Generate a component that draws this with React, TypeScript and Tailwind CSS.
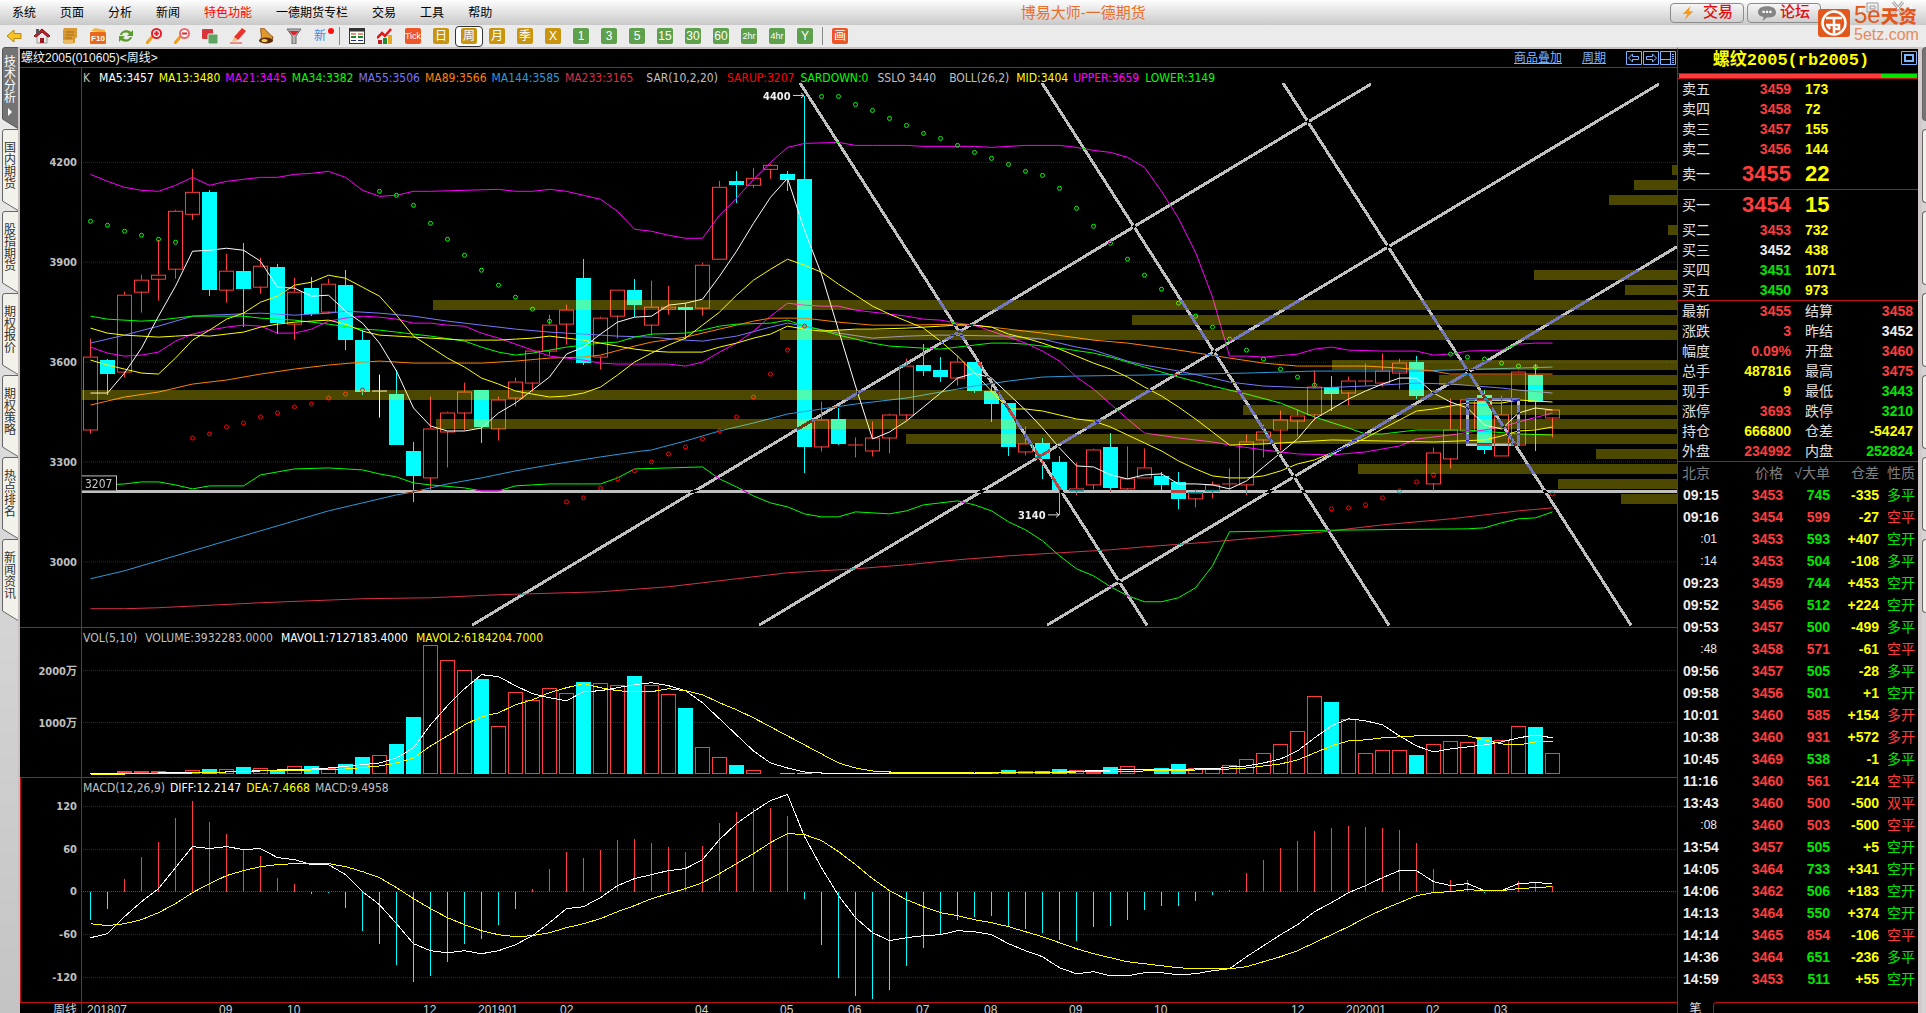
import type { ReactNode } from 'react'
import clsx from 'clsx'

const FIRST_X = 90
const STEP = 17

// "4:12 15 9" reads as bar 4 = 12, bar 5 = 15, bar 6 = 9
function series(src: string): [number, number][] {
  let i = -1
  return src.split(' ').map((token) => {
    const [a, b] = token.split(':')
    i = b === undefined ? i + 1 : Number(a)
    return [i, Number(b ?? a)]
  })
}

const barX = (i: number) => FIRST_X + STEP * i
const priceY = (v: number) => Math.round(60 + v / 2.7034)
const lowerY = (v: number) => Math.round(620 + v / 3)
const points = (src: string, y: (v: number) => number) =>
  series(src)
    .map(([i, v]) => `${barX(i) + 0.5},${y(v) + 0.5}`)
    .join(' ')

// direction, high, body top, body bottom, low
const CANDLES =
  'u 755 804 1001 1010|d 808 812 849 905|u 628 634 844 861|u 581 596 628 684|u 487 580 593 652|u 406 409 566 591|u 295 358 417 433|d 352 357 622 638|u 524 571 623 657|d 495 570 619 722|u 535 558 615 633|d 552 560 711 741|u 589 626 714 757|d 587 616 687 692|u 592 606 682 688|d 568 608 757 784|d 730 757 898 905|w 852 896 896 968|d 838 903 1044 1044|d 1035 1060 1127 1198|u 911 998 1131 1165|u 952 955 1006 1103|u 873 898 953 1003|d 892 892 995 1038|u 911 920 998 1030|u 860 871 914 937|u 788 788 874 898|u 689 717 786 800|u 662 677 715 770|d 538 589 819 825|u 696 698 804 838|u 622 622 693 753|d 592 622 662 696|u 597 669 717 745|u 611 667 674 689|d 658 668 675 755|u 549 555 671 692|u 327 342 539 539|d 300 327 338 387|u 292 320 337 346|u 280 285 296 321|d 300 307 324 354|d 96 322 1048 1118|u 925 974 1045 1060|d 940 973 1041 1044|u 1022 1042 1042 1076|u 979 1022 1058 1073|u 957 961 1023 1065|u 808 826 961 976|d 768 825 840 854|d 803 838 857 871|u 800 817 860 881|d 816 816 894 900|d 872 895 930 981|d 927 927 1048 1073|u 992 1038 1061 1070|d 1025 1038 1081 1135|d 1072 1089 1166 1232|u 1090 1160 1165 1180|u 1052 1055 1150 1162|d 1011 1049 1161 1170|u 1046 1132 1161 1165|u 1052 1104 1131 1131|d 1117 1127 1152 1166|d 1117 1144 1190 1217|u 1162 1170 1186 1211|u 1141 1150 1164 1187|u 1106 1146 1146 1162|u 1014 1034 1150 1180|u 987 1007 1026 1076|u 949 972 999 1057|u 945 963 977 1020|u 842 885 961 976|d 854 885 903 948|u 857 869 899 935|u 822 869 869 881|u 795 842 872 884|u 808 820 847 892|d 800 816 908 916|u 1049 1063 1147 1165|u 916 999 1080 1107|u 917 920 1004 1004|d 892 906 1057 1068|u 908 961 1070 1070|u 840 844 1042 1042|d 822 852 925 1061|u 947 947 967 1022'
    .split('|')
    .map((row) => {
      const [dir, ...v] = row.split(' ')
      const [high, top, bottom, low] = v.map(Number).map(priceY)
      return { dir, high, top, bottom, low }
    })

const PRICE_LINES = [
  { color: '#d8304a', src: '0:1485 2:1485 4:1481 10:1467 16:1456 20:1455 24:1447 30:1437 34:1424 36:1415 38:1403 41:1388 45:1377 48:1365 51:1351 54:1342 57:1332 60:1326 62:1317 66:1304 68:1296 72:1278 76:1258 80:1240 84:1220 86:1210' },
  { color: '#2d9bd8', src: '0:1402 2:1381 4:1355 6:1327 8:1301 10:1274 12:1247 14:1220 16:1198 18:1177 19:1167 21:1147 23:1130 25:1112 27:1096 30:1074 32:1060 33:1053 35:1031 37:1004 39:980 41:958 43:944 45:930 48:913 50:897 52:882 54:868 56:858 58:855 62:852 68:845 72:842 78:840 82:836 86:831' },
  { color: '#ff8000', src: '0:934 2:912 4:897 6:877 8:866 10:848 12:834 14:824 16:816 17:815 19:820 23:820 25:815 27:806 29:803 30:797 32:772 33:762 35:748 37:727 39:706 40:698 42:697 44:707 46:716 48:717 51:715 53:723 56:738 59:757 61:766 64:785 67:806 69:819 71:826 75:828 77:832 79:842 80:848 86:848' },
  { color: '#7878ff', src: '0:766 2:743 4:720 6:693 7:690 10:685 12:689 14:685 15:679 17:683 19:692 21:705 23:717 25:728 27:736 29:740 31:745 33:750 35:758 36:759 38:745 40:723 41:712 42:718 44:738 46:752 48:747 50:744 54:745 56:755 58:775 59:783 61:813 62:824 64:841 66:860 67:870 69:882 72:888 75:880 78:873 80:877 83:888 84:891 86:901' },
  { color: '#00ff00', src: '0:693 1:701 3:705 4:703 6:693 9:693 10:698 12:704 14:713 16:726 17:731 18:734 20:745 22:760 23:775 24:790 25:798 26:793 28:777 30:765 31:762 32:750 33:742 35:737 36:730 37:718 38:713 40:711 41:702 42:718 43:730 44:743 45:753 46:764 47:772 49:779 50:780 52:771 53:766 54:766 55:768 57:779 59:793 60:802 61:817 62:829 64:856 66:882 68:904 70:928 72:965 74:994 75:1012 76:1012 78:999 81:1000 84:1010 86:1013' },
  { color: '#ff00ff', src: '0:777 793 801 797 790 760 740 729 723 717 720 737 738 726 705 698 693 695 700 712 712 716 720 739 752 767 784 800 805 812 820 823 823 823 823 826 817 790 764 732 692 658 661 665 666 675 681 688 692 701 704 712 716 732 748 765 788 815 857 890 930 970 1009 64:1021 66:1034 67:1040 69:1053 71:1065 73:1069 75:1061 77:1043 78:1024 80:1014 82:1001 83:992 84:979 86:954' },
  { color: '#ffff00', src: '0:812 824 835 847 850 805 756 730 701 684 655 638 609 601 582 590 615 639 690 747 777 806 829 860 877 896 902 912 907 901 885 851 817 793 770 752 717 680 636 596 564 537 554 573 606 636 664 687 705 725 760 800 845 895 944 944 950 961 971 975 991 1013 1035 1056 1085 1107 1124 1131 1131 1124 1110 1093 1081 1063 1043 1022 997 974 950 944 935 927 928 928 918 921 925' },
  { color: '#ffff00', src: '0:725 738 743 747 750 747 743 747 740 736 721 714 707 706 702 714 733 744 19:748 22:757 24:758 25:753 26:752 27:747 28:751 29:757 30:765 31:772 32:782 33:786 34:789 36:790 37:776 38:766 39:752 40:741 41:720 42:728 43:732 44:731 45:726 46:728 48:724 50:718 51:716 52:716 53:723 54:741 55:751 56:764 57:782 58:800 59:819 60:836 61:858 62:884 63:908 64:939 65:970 66:1006 67:1040 69:1038 71:1034 73:1026 76:1029 79:1032 82:1026 83:1016 84:1004 85:1000 86:993' },
  { color: '#ff00ff', src: '0:309 328 342 352 355 339 317 339 328 323 315 315 307 306 301 317 352 368 366 355 355 24:350 25:355 26:355 27:350 28:355 29:366 30:377 31:409 32:458 33:463 34:473 35:482 36:480 37:420 38:374 39:322 40:275 41:234 42:225 44:223 45:231 46:229 48:229 49:233 52:233 53:236 55:231 57:231 58:234 59:244 60:250 61:261 62:289 63:353 64:427 65:520 66:640 67:801 68:801 69:804 71:796 72:782 73:777 74:785 76:786 78:788 79:798 80:796 81:788 83:785 84:768 85:764 86:764' },
  { color: '#00ff00', src: '0:1153 2:1147 3:1142 4:1142 5:1150 6:1160 7:1153 9:1153 10:1123 11:1115 12:1107 14:1104 16:1109 17:1120 18:1128 19:1144 20:1150 22:1158 23:1166 24:1166 25:1152 26:1150 27:1145 29:1147 30:1147 31:1130 32:1106 34:1102 36:1099 37:1132 38:1155 39:1178 40:1198 41:1209 42:1228 43:1236 44:1236 45:1223 47:1226 48:1220 49:1204 51:1193 52:1203 53:1218 54:1248 55:1270 56:1300 57:1340 58:1375 59:1395 60:1425 61:1448 62:1466 63:1464 64:1455 65:1428 66:1368 67:1275 70:1272 75:1270 81:1269 82:1266 83:1253 84:1242 85:1239 86:1223' },
  { color: '#ffffff', src: '0:901 901 845 779 693 611 515 513 508 514 544 614 617 639 636 678 711 766 840 941 990 1003 1003 995 953 928 893 857 795 775 740 707 695 693 663 657 645 585 515 440 370 320 460 578 730 880 1025 1006 977 939 899 861 847 861 903 945 996 1048 1098 1101 1123 1133 1123 1120 1147 1147 1150 1160 1137 1100 1062 1025 970 943 917 896 875 861 861 901 925 941 988 998 955 942 946' },
]

const SAR_DOWN = '0:434 447 461 472 483 491 17:353 366 393 442 485 528 569 607 642 674 706 43:96 96 118 136 158 177 196 212 231 250 266 282 299 312 347 399 450 495 539 582 620 658 691 723 755 783 807 834 856 878 80:796 804 809 818 826 831'
const SAR_UP = '6:1023 1010 993 980 966 953 939 929 915 902 891 28:1196 1185 1158 1134 1110 1088 1066 1045 1025 1004 964 912 850 783 720 73:1215 1210 1202 1185 1164 1141 1121 86:1172'

// left edge, level
const PROFILE = [
  [1672, 297], [1634, 337], [1609, 378], [1668, 459], [1534, 581], [1625, 621], [433, 662], [1132, 702], [780, 743],
  [1332, 824], [1439, 865], [82, 905], [1243, 946], [436, 986], [906, 1027], [1596, 1067], [1358, 1108], [1558, 1148], [1621, 1189],
]

const TREND_LINES = [
  [800, 83, 1147, 626], [1042, 83, 1389, 626], [1283, 83, 1631, 626],
  [472, 626, 1371, 84], [759, 626, 1659, 84], [1047, 626, 1677, 247],
]

const VOLUMES = series(
  '0:460 460 457 457 457 458 454 450 451 444 448 453 442 441 448 435 414 409 375 294 79 124 154 180 322 220 244 208 223 189 193 199 171 199 226 267 385 415 438 454 459 459 459 459 459 459 459 459 459 459 459 459 459 459 54:453 455 455 450 453 456 444 442 459 447 435 447 448 439 421 403 376 337 232 249 301 403 394 394 408 376 367 370 354 364 322 324 403',
)
const VOL_MA = [
  { color: '#ffffff', src: '0:463 4:459 8:455 11:451 13:446 14:445 17:430 18:415 19:384 20:315 21:257 22:206 23:166 24:172 25:199 26:223 27:235 28:244 29:217 30:212 31:205 32:196 33:190 34:199 35:214 36:250 37:298 38:346 39:392 40:430 41:445 42:457 43:460 50:460 53:458 57:455 60:451 65:446 66:448 67:442 68:438 69:430 70:418 71:394 72:354 73:319 74:298 75:303 76:316 77:348 78:379 79:397 80:388 81:382 82:376 83:367 84:355 85:346 86:355' },
  { color: '#ffff00', src: '0:463 2:463 6:460 10:454 13:451 15:447 17:439 18:430 19:415 20:379 21:347 22:316 23:292 24:280 25:256 26:241 27:220 28:205 29:193 30:205 31:214 32:217 33:217 34:208 35:213 36:226 37:248 38:269 39:295 40:322 41:349 42:376 43:403 44:428 45:445 46:454 47:457 52:459 58:457 62:452 65:449 67:446 68:445 69:439 70:433 71:421 72:400 73:379 74:364 75:361 76:355 77:352 78:349 79:347 80:347 81:349 82:361 83:373 84:376 85:367 86:367' },
]

const MACD_BARS = series(
  '0:900 867 777 711 666 594 543 606 642 690 708 774 792 822 819 864 933 972 1035 1086 1068 1026 972 957 915 867 807 747 696 714 690 660 657 669 681 696 678 609 576 564 564 588 837 975 1074 1128 1137 1110 1038 984 945 900 892 888 918 927 939 960 963 921 918 900 870 858 858 843 825 810 759 720 684 663 633 624 618 621 624 630 669 747 780 780 820 816 783 788 797',
)
const MACD_LINES = [
  { color: '#ffffff', src: '0:952 940 889 844 804 740 679 685 679 688 685 712 718 733 733 763 814 853 910 969 991 997 991 1000 991 972 945 905 865 859 832 796 775 763 751 745 718 658 609 573 541 523 648 740 825 890 937 961 952 946 943 931 934 943 970 991 1009 1040 1060 1054 1066 1066 1057 1057 1063 1060 1051 1043 1009 976 943 912 874 847 817 796 772 751 751 784 796 790 811 811 790 787 790' },
  { color: '#ffff00', src: '0:910 916 910 898 877 850 817 790 766 751 739 733 730 730 730 739 754 772 800 835 865 892 913 931 943 949 945 937 922 910 895 874 856 835 820 805 787 760 730 700 667 640 643 661 694 733 775 811 838 859 877 886 898 907 919 934 949 967 985 1000 1012 1024 1030 1036 1042 1045 1045 1045 1039 1024 1009 991 967 943 919 892 868 847 826 817 814 808 811 811 805 802 799' },
]

const DATES: [number, string][] = [
  [87, '201807'], [219, '09'], [287, '10'], [423, '12'], [478, '201901'], [560, '02'], [695, '04'], [780, '05'], [848, '06'],
  [916, '07'], [984, '08'], [1069, '09'], [1154, '10'], [1291, '12'], [1346, '202001'], [1426, '02'], [1494, '03'],
]

const RED = 'text-[#ff3c3c]'
const GREEN = 'text-[#00e600]'
const YELLOW = 'text-[#ffff00]'
const WHITE = 'text-[#ececec]'
const SANS = 'font-["Liberation_Sans","Noto_Sans_CJK_SC",sans-serif]'
const CHART_FONT = 'font-["DejaVu_Sans_Condensed","Noto_Sans","Noto_Sans_CJK_SC",sans-serif]'

const ASKS = [['卖五', '3459', '173'], ['卖四', '3458', '72'], ['卖三', '3457', '155'], ['卖二', '3456', '144'], ['卖一', '3455', '22']]
const BIDS = [['买一', '3454', '15'], ['买二', '3453', '732'], ['买三', '3452', '438'], ['买四', '3451', '1071'], ['买五', '3450', '973']]

const STATS = [
  ['最新', '3455', RED, '结算', '3458', RED],
  ['涨跌', '3', RED, '昨结', '3452', WHITE],
  ['幅度', '0.09%', RED, '开盘', '3460', RED],
  ['总手', '487816', YELLOW, '最高', '3475', RED],
  ['现手', '9', YELLOW, '最低', '3443', GREEN],
  ['涨停', '3693', RED, '跌停', '3210', GREEN],
  ['持仓', '666800', YELLOW, '仓差', '-54247', YELLOW],
  ['外盘', '234992', RED, '内盘', '252824', GREEN],
]

// time, price, size, size colour, open interest change, kind, kind colour
const TICKS = `09:15 3453 745 g -335 多平 g
09:16 3454 599 r -27 空平 r
:01 3453 593 g +407 空开 g
:14 3453 504 g -108 多平 g
09:23 3459 744 g +453 空开 g
09:52 3456 512 g +224 空开 g
09:53 3457 500 g -499 多平 g
:48 3458 571 r -61 空平 r
09:56 3457 505 g -28 多平 g
09:58 3456 501 g +1 空开 g
10:01 3460 585 r +154 多开 r
10:38 3460 931 r +572 多开 r
10:45 3469 538 g -1 多平 g
11:16 3460 561 r -214 空平 r
13:43 3460 500 r -500 双平 r
:08 3460 503 r -500 空平 r
13:54 3457 505 g +5 空开 g
14:05 3464 733 g +341 空开 g
14:06 3462 506 g +183 空开 g
14:13 3464 550 g +374 空开 g
14:14 3465 854 r -106 空平 r
14:36 3464 651 g -236 多平 g
14:59 3453 511 g +55 空开 g`
  .split('\n')
  .map((row) => row.split(' '))

const MENUS = ['系统', '页面', '分析', '新闻', '特色功能', '一德期货专栏', '交易', '工具', '帮助']
const PERIODS = ['Tick', '日', '周', '月', '季', 'X', '1', '3', '5', '15', '30', '60', '2hr', '4hr', 'Y']
const SIDE_TABS = ['技术分析', '国内期货', '股指期货', '期权报价', '期权策略', '热点排名', '新闻资讯']

const TOOL_ICONS: { name: string; art: ReactNode }[] = [
  { name: '后退', art: <path d="M1 8l7-6v3.500h7v5H8V14z" fill="#f7c325" stroke="#b98a0c" /> },
  {
    name: '首页',
    art: (
      <>
        <path d="M3 8v7h10V8L8 4z" fill="#e8e8e8" stroke="#999" />
        <path d="M0 8L8 1l8 7-2 1-6-5-6 5z" fill="#c8202c" stroke="#801018" />
        <path d="M2 1h3v4H2z" fill="#555" />
        <path d="M6 10h4v5H6z" fill="#a01822" />
      </>
    ),
  },
  {
    name: '公告',
    art: (
      <>
        <path d="M2 0h13v9l-2 2v4H1V2z" fill="#d99a35" />
        <path d="M4 4h8M4 7h8M3 10h7" stroke="#a86a12" />
        <path d="M1 12h10v4H2z" fill="#eebb62" />
      </>
    ),
  },
  {
    name: 'F10',
    art: (
      <>
        <path d="M1 3l4-3 10 2v3z" fill="#f2b544" />
        <rect y="4" width="16" height="12" rx="1" fill="#e8691c" />
        <text x="8" y="13" textAnchor="middle" fontSize="8" fontWeight="bold" fill="#fff">F10</text>
      </>
    ),
  },
  {
    name: '刷新',
    art: <path d="M2 7c1-5 8-6 11-3l2-2v6H9l2-2C9 4 5 4 4 7zM14 9c-1 5-8 6-11 3l-2 2V8h6l-2 2c2 2 6 2 7-1z" fill="#5a9c30" />,
  },
  {
    name: '放大',
    art: (
      <>
        <path d="M6 9l-5 6" stroke="#f0a020" strokeWidth="3" strokeLinecap="round" />
        <circle cx="10.500" cy="5.500" r="4.500" fill="#fff" stroke="#e0202a" strokeWidth="2" />
        <path d="M8 5.500h5M10.500 3v5" stroke="#e0202a" strokeWidth="2" />
      </>
    ),
  },
  {
    name: '缩小',
    art: (
      <>
        <path d="M6 9l-5 6" stroke="#f0a020" strokeWidth="3" strokeLinecap="round" />
        <circle cx="10.500" cy="5.500" r="4.500" fill="#fff" stroke="#e86a70" strokeWidth="2" />
        <path d="M8 5.500h5" stroke="#e0202a" strokeWidth="2" />
      </>
    ),
  },
  {
    name: '叠加',
    art: (
      <>
        <rect x="0" y="1" width="11" height="10" rx="1" fill="#d8363c" />
        <rect x="6" y="6" width="10" height="10" rx="1" fill="#5fa463" stroke="#e8f0e8" />
      </>
    ),
  },
  {
    name: '画线',
    art: (
      <>
        <path d="M4 9l8-9 4 3-8 9z" fill="#e8322a" />
        <path d="M4 9l4 3-6 2z" fill="#f3c07a" />
        <path d="M0 15h12" stroke="#e89090" strokeWidth="2" />
      </>
    ),
  },
  {
    name: '预警',
    art: (
      <>
        <path d="M3 0c4-1 6 5 12 9l-1 3-12 1c3-5 0-9 1-13z" fill="#e09a2c" stroke="#8a4a10" />
        <ellipse cx="8" cy="12.500" rx="7" ry="3" fill="#5c2a08" />
        <ellipse cx="6.500" cy="12.500" rx="3" ry="1.500" fill="#f8d050" />
      </>
    ),
  },
  {
    name: '筛选',
    art: (
      <>
        <path d="M1 1h14l-5 7v8H6V8z" fill="#b4b4b4" stroke="#6a6a6a" />
        <path d="M3 3h10L9 7H7z" fill="#e0202a" />
      </>
    ),
  },
]

function Icon({ children, size = 16 }: { children: ReactNode; size?: number }) {
  return (
    <svg className="shrink-0" width={size} height={size} viewBox="0 0 16 16" fill="none" aria-hidden="true">
      {children}
    </svg>
  )
}

function PeriodButton({ label }: { label: string }) {
  const hot = label === 'Tick' || label === '画'
  const gold = ['日', '周', '月', '季', 'X'].includes(label)
  return (
    <button
      className={clsx(
        'flex h-[21px] w-7 items-center justify-center rounded-sm border',
        label === '周' ? 'border-[#333] bg-white' : 'border-transparent',
      )}
    >
      <span
        className={clsx(
          'flex size-4 items-center justify-center rounded-xs leading-none text-white',
          label.length > 2 ? 'text-[9px]' : 'text-[12px]',
          hot && 'bg-[#ee5527]',
          gold && 'bg-[#c9950f]',
          !hot && !gold && 'bg-[#5fa04c]',
        )}
      >
        {label}
      </span>
    </button>
  )
}

function TopBar() {
  return (
    <header className="relative shrink-0">
      <div className="flex h-[25px] items-center bg-linear-to-b from-[#fdfdfd] to-[#c9c9c9] text-[12px] text-black">
        <nav className="flex w-[53%] shrink-0 gap-6 pl-3">
          {MENUS.map((m) => (
            <button key={m} className={clsx('leading-6', m === '特色功能' && 'text-[#ff0000]')}>
              {m}
            </button>
          ))}
        </nav>
        <h1 className="text-[15px] leading-6 whitespace-nowrap text-[#e8702a]">博易大师-一德期货</h1>
        <div className="flex flex-1 justify-end gap-[3px] pr-[105px]">
          <button className="flex h-5 w-[74px] items-center justify-center gap-2 rounded-sm border border-[#8c8c8c] bg-linear-to-b from-[#f6f6f6] to-[#cfcfcf] text-[15px] font-medium text-[#dd1111]">
            <Icon size={14}>
              <path d="M11 0L2 9h5l-3 7 10-10H9z" fill="#f59a1c" />
            </Icon>
            交易
          </button>
          <button className="flex h-5 w-[74px] items-center justify-center gap-1 rounded-sm border border-[#8c8c8c] bg-linear-to-b from-[#f6f6f6] to-[#cfcfcf] text-[15px] font-medium text-[#dd1111]">
            <Icon size={18}>
              <path d="M8 2c5 0 8 2 8 5.500S13 12 8 12l-4 3 1-3.500C2 11 0 9.500 0 7.500 0 4 3 2 8 2z" fill="#858585" />
              <path d="M4 7h2M7 7h2M10 7h2" stroke="#fff" strokeWidth="2" />
            </Icon>
            论坛
          </button>
        </div>
      </div>
      <div className="flex h-[22px] items-center bg-[#ebebeb]">
        {TOOL_ICONS.map(({ name, art }) => (
          <button key={name} aria-label={name} className="flex h-5 w-7 items-center justify-center">
            <Icon>{art}</Icon>
          </button>
        ))}
        <button className="relative h-5 w-7 pr-1 text-[12px] leading-5 text-[#3c8ce8]">
          新
          <span className="absolute top-0.5 right-0.5 size-1.5 rounded-full bg-[#ff1010]" />
        </button>
        <span className="mx-[3px] h-[18px] w-px bg-[#8a8a8a]" />
        <button aria-label="报价" className="flex h-5 w-7 items-center justify-center">
          <Icon>
            <rect x="0.500" y="0.500" width="15" height="15" fill="#fffff0" stroke="#333" />
            <path d="M1 2h14" stroke="#333" strokeWidth="3" />
            <path d="M2 6h5M9 6h5" stroke="#d02020" strokeWidth="1" />
            <path d="M2 9h5M9 9h5" stroke="#109030" strokeWidth="2" />
            <path d="M2 12.500h5M9 12.500h5" stroke="#203080" strokeWidth="1" />
          </Icon>
        </button>
        <button aria-label="走势" className="flex h-5 w-7 items-center justify-center">
          <Icon>
            <path d="M1 12h4v4H1z" fill="#c02020" />
            <path d="M6 10h4v6H6z" fill="#208a3c" />
            <path d="M11 7h4v9h-4z" fill="#e8a820" />
            <path d="M0 10l5-5 3 3 6-7" stroke="#e01818" strokeWidth="2.500" />
          </Icon>
        </button>
        {PERIODS.map((p) => (
          <PeriodButton key={p} label={p} />
        ))}
        <span className="mx-[3px] h-[18px] w-px bg-[#8a8a8a]" />
        <PeriodButton label="画" />
      </div>
      <svg className="absolute top-0 right-2" width="82" height="14" viewBox="0 0 82 14" fill="none" aria-hidden="true">
        <path d="M24.500 0v14M49.500 0v14M75.500 0v14" stroke="#f8f8f8" />
        <path d="M31 3h11v9H31zM34 6h5v3h-5z" stroke="#9a9a9a" />
        <path d="M57 2l10 12M67 2L57 14" stroke="#a8a8a8" strokeWidth="3" />
        <path d="M57 2l10 12M67 2L57 14" stroke="#f4f4f4" />
      </svg>
      <div className="absolute top-0 right-0 flex h-10 items-start gap-1 pt-[5px] pr-1">
        <svg className="mt-1" width="32" height="28" viewBox="0 0 32 28" fill="none" aria-hidden="true">
          <rect width="32" height="28" rx="3" fill="#e2571c" />
          <circle cx="16" cy="14" r="11.500" stroke="#fff" strokeWidth="2.500" />
          <path d="M8 9h16M16 9v15M8 16h13v4h-5M9 16l3 4" stroke="#fff" strokeWidth="2.500" />
        </svg>
        <div className="flex w-[68px] flex-col text-[#e2571c]">
          <span className="text-[18px] leading-5 font-black whitespace-nowrap">
            <span className="text-[24px] font-normal">5e</span>天资
          </span>
          <span className="text-[16px] leading-4 text-[#e58a5c]">5etz.com</span>
        </div>
      </div>
    </header>
  )
}

function SideTabs() {
  return (
    <nav className="flex w-5 shrink-0 flex-col border-r-2 border-[#c8c0c0] bg-linear-to-b from-[#ececec] to-[#c4c4c4] pl-0.5 text-[12px] leading-3">
      {SIDE_TABS.map((tab, n) => (
        <button
          key={tab}
          className={clsx('relative flex h-[82px] w-4 flex-col items-center', n === 0 ? 'pt-[9px] text-white' : 'pt-[13px] text-[#333]')}
        >
          <svg className="absolute inset-0" width="16" height="82" viewBox="0 0 16 82" aria-hidden="true">
            <path
              d="M16 .5H3Q.5 .5 .5 3V72L16 81.500"
              fill={n === 0 ? '#747474' : '#f2f2ea'}
              stroke={n === 0 ? '#555' : '#666'}
            />
          </svg>
          <span className="relative w-3 break-all">{tab}</span>
          {n === 0 && (
            <svg className="relative mt-1" width="4" height="8" viewBox="0 0 4 8" aria-hidden="true">
              <path d="M0 0l4 4-4 4z" fill="#fff" />
            </svg>
          )}
        </button>
      ))}
    </nav>
  )
}

function AxisPane({
  top,
  height,
  ticks,
  boxed,
  className,
  legendGap,
  legend,
  children,
}: {
  top: number
  height: number
  ticks: [number, string][]
  boxed?: boolean
  className: string
  legendGap: string
  legend: ReactNode
  children: ReactNode
}) {
  return (
    <section className={clsx('flex min-h-0 border-b border-[#c01010]', className)}>
      <div
        className={clsx(
          'relative w-[62px] shrink-0 border-r border-[#c01010] text-[11px] font-bold text-[#c0c0c0]',
          boxed && 'border-l',
          CHART_FONT,
        )}
      >
        {ticks.map(([y, label]) => (
          <span
            key={label}
            className="absolute right-1 -translate-y-1/2 pt-0.5 leading-4 whitespace-nowrap"
            style={{ top: `${((y - top) / height) * 100}%` }}
          >
            {label}
          </span>
        ))}
      </div>
      <div className="relative min-w-0 flex-1">
        <svg
          className="absolute inset-0 size-full isolate"
          viewBox={`82 ${top} 1595 ${height}`}
          preserveAspectRatio="none"
          shapeRendering="crispEdges"
          fill="none"
          aria-hidden="true"
        >
          <rect x="82" y={top} width="1595" height={height} fill="#000" />
          {ticks.map(([y, label]) => (
            <path
              key={label}
              d={`M83 ${Math.floor(y) + 0.5}H1677`}
              stroke={label === '0' ? '#d01818' : '#900000'}
              strokeDasharray="1 1"
            />
          ))}
          {children}
        </svg>
        <div className={clsx('absolute top-0.5 left-px flex text-[12px] leading-4 whitespace-nowrap', legendGap, CHART_FONT)}>
          {legend}
        </div>
      </div>
    </section>
  )
}

function PriceChart() {
  return (
    <>
      {CANDLES.map(({ dir, high, top, bottom, low }, i) => {
        const x = barX(i)
        if (dir === 'd') {
          return <path key={i} d={`M${x} ${high}h1V${top}h7V${bottom}h-7V${low}h-1V${bottom}h-7V${top}h7z`} fill="#00ffff" />
        }
        const color = dir === 'w' ? '#ffffff' : '#ff3c3c'
        return (
          <g key={i} stroke={color}>
            <path d={`M${x + 0.5} ${high}V${top}M${x + 0.5} ${bottom}V${low}`} />
            {bottom - top < 1 ? (
              <path d={`M${x - 7} ${top + 0.5}h15`} />
            ) : (
              <rect x={x - 6.5} y={top + 0.5} width="14" height={bottom - top} />
            )}
          </g>
        )
      })}
      {PRICE_LINES.map(({ color, src }, n) => (
        <polyline key={n} points={points(src, priceY)} stroke={color} />
      ))}
      {series(SAR_DOWN).map(([i, v]) => (
        <circle key={i} cx={barX(i) + 0.5} cy={priceY(v) + 0.5} r="2" stroke="#00ff00" shapeRendering="auto" />
      ))}
      {series(SAR_UP).map(([i, v]) => (
        <circle key={i} cx={barX(i) + 0.5} cy={priceY(v) + 0.5} r="2" stroke="#ff0000" shapeRendering="auto" />
      ))}
      {PROFILE.map(([x, v]) => (
        <rect key={v} x={x} y={priceY(v) - 5} width={1677 - x} height="10" fill="#fff000" fillOpacity="0.3" />
      ))}
      {TREND_LINES.map(([x1, y1, x2, y2]) => (
        <line key={`${x1}-${y1}`} className="mix-blend-difference" x1={x1} y1={y1} x2={x2} y2={y2} stroke="#c0c0c0" strokeWidth="3" />
      ))}
      <path className="mix-blend-difference" d="M82 492.500H1677" stroke="#c0c0c0" strokeWidth="3" />
      <rect className="mix-blend-difference" x="1467.500" y="399.500" width="51" height="46" stroke="#c0c0c0" strokeWidth="3" />
      <rect x="81.500" y="476.500" width="35" height="15" fill="#000" stroke="#c0c0c0" />
      <g className={CHART_FONT} fill="#c8c8c8">
        <text x="85" y="489" fontSize="12">3207</text>
        <text x="763" y="100" fontSize="11" fontWeight="bold" fill="#f0f0f0">4400</text>
        <text x="1018" y="520" fontSize="11" fontWeight="bold" fill="#f0f0f0">3140</text>
      </g>
      <path d="M793 95.500h11M801 93l3 2.500-3 2.500M1048 515.500h11M1056 513l3 2.500-3 2.500" stroke="#d8d8d8" />
    </>
  )
}

function ChartArea() {
  return (
    <main className="flex min-w-0 flex-1 flex-col border-t-2 border-[#c8c0c0] bg-black">
      <div className="flex h-[19px] shrink-0 items-center justify-between border-b border-[#c01010] pl-px text-[12px] text-[#f0f0f0]">
        <span>螺纹2005(010605)&lt;周线&gt;</span>
        <div className="flex items-center text-[#7ab4ff]">
          <a href="#overlay" className="mr-5 underline">商品叠加</a>
          <a href="#period" className="mr-5 underline">周期</a>
          <div className="flex gap-px pr-px">
            <button aria-label="上一个">
              <Icon>
                <path d="M.5 1.500h15v13H.5zM2.500 8l4-4v2.500h6v3h-6V12z" stroke="#7ab4ff" />
              </Icon>
            </button>
            <button aria-label="下一个">
              <Icon>
                <path d="M.5 1.500h15v13H.5zM13.500 8l-4-4v2.500h-6v3h6V12z" stroke="#7ab4ff" />
              </Icon>
            </button>
            <button aria-label="布局">
              <Icon>
                <path d="M.5 1.500h15v13H.5zM10.500 2v12M1 9.500h9" stroke="#7ab4ff" />
                <path d="M12 4.500h3M12 6.500h3M12 8.500h3M12 10.500h3M12 12.500h3" stroke="#7ab4ff" strokeDasharray="2 1" />
              </Icon>
            </button>
          </div>
        </div>
      </div>

      <AxisPane
        top={68}
        height={560}
        className="flex-[561]"
        legendGap="gap-[5px]"
        ticks={[[162.5, '4200'], [262.5, '3900'], [362.5, '3600'], [462.5, '3300'], [562.5, '3000']]}
        legend={
          <>
            <span className="mr-1 text-[#c0c0c0]">K</span>
            <span className="text-white">MA5:3457</span>
            <span className="text-[#ffff00]">MA13:3480</span>
            <span className="text-[#ff00ff]">MA21:3445</span>
            <span className="text-[#00ff00]">MA34:3382</span>
            <span className="text-[#7878ff]">MA55:3506</span>
            <span className="text-[#ff8000]">MA89:3566</span>
            <span className="text-[#2d9bd8]">MA144:3585</span>
            <span className="text-[#d8304a]">MA233:3165</span>
            <span className="ml-2 text-[#c0c0c0]">SAR(10,2,20)</span>
            <span className="ml-1 text-[#ff0000]">SARUP:3207</span>
            <span className="ml-px text-[#00ff00]">SARDOWN:0</span>
            <span className="ml-1 text-[#c0c0c0]">SSLO 3440</span>
            <span className="ml-2 text-[#c0c0c0]">BOLL(26,2)</span>
            <span className="ml-0.5 text-[#ffff00]">MID:3404</span>
            <span className="text-[#ff00ff]">UPPER:3659</span>
            <span className="ml-px text-[#00ff00]">LOWER:3149</span>
          </>
        }
      >
        <PriceChart />
      </AxisPane>

      <AxisPane
        top={629}
        height={148}
        className="flex-[149]"
        legendGap="gap-2"
        ticks={[[671.5, '2000万'], [723.5, '1000万']]}
        legend={
          <>
            <span className="text-[#c0c0c0]">VOL(5,10)</span>
            <span className="text-[#c0c0c0]">VOLUME:3932283.0000</span>
            <span className="text-white">MAVOL1:7127183.4000</span>
            <span className="text-[#ffff00]">MAVOL2:6184204.7000</span>
          </>
        }
      >
        {VOLUMES.map(([i, v]) =>
          CANDLES[i].dir === 'd' ? (
            <rect key={i} x={barX(i) - 7} y={lowerY(v)} width="15" height={774 - lowerY(v)} fill="#00ffff" />
          ) : (
            <rect key={i} x={barX(i) - 6.5} y={lowerY(v) + 0.5} width="14" height={773 - lowerY(v)} stroke="#ff3c3c" />
          ),
        )}
        {VOL_MA.map(({ color, src }) => (
          <polyline key={color} points={points(src, lowerY)} stroke={color} />
        ))}
      </AxisPane>

      <AxisPane
        top={778}
        height={224}
        boxed
        className="flex-[225]"
        legendGap="gap-[5px]"
        ticks={[[806.5, '120'], [849.5, '60'], [891.5, '0'], [934.5, '-60'], [977.5, '-120']]}
        legend={
          <>
            <span className="text-[#c0c0c0]">MACD(12,26,9)</span>
            <span className="text-white">DIFF:12.2147</span>
            <span className="text-[#ffff00]">DEA:7.4668</span>
            <span className="text-[#c0c0c0]">MACD:9.4958</span>
          </>
        }
      >
        {MACD_BARS.map(([i, v]) => (
          <path key={i} d={`M${barX(i) + 0.5} 892V${lowerY(v)}`} stroke={v > 815 ? '#00ffff' : '#ff3c3c'} />
        ))}
        {MACD_LINES.map(({ color, src }) => (
          <polyline key={color} points={points(src, lowerY)} stroke={color} />
        ))}
      </AxisPane>

      <footer className="flex h-2.5 shrink-0 overflow-hidden text-[12px] leading-[14px] text-[#d0d0d0]">
        <span className="w-[62px] shrink-0 border-r border-[#c01010] pr-1 text-right">周线</span>
        <div className="relative flex-1">
          {DATES.map(([x, label]) => (
            <span key={x} className="absolute top-0" style={{ left: `${((x - 82) / 1595) * 100}%` }}>
              {label}
            </span>
          ))}
        </div>
      </footer>
    </main>
  )
}

function Depth({ rows }: { rows: string[][] }) {
  return (
    <table className="w-full table-fixed border-b border-[#c01010]">
      <tbody>
        {rows.map(([name, price, qty]) => {
          const best = name.endsWith('一')
          const diff = Number(price) - 3452
          return (
            <tr key={name} className={best ? 'h-[30px]' : 'h-5'}>
              <th className="w-10 py-0 pl-1 text-left font-normal text-[#e0e0e0]">{name}</th>
              <td
                className={clsx(
                  'w-[73px] p-0 text-right font-bold',
                  best && 'text-[22px] leading-6',
                  diff > 0 && RED,
                  diff === 0 && WHITE,
                  diff < 0 && GREEN,
                )}
              >
                {price}
              </td>
              <td className={clsx('py-0 pl-3.5 font-bold', YELLOW, best && 'text-[22px] leading-6')}>{qty}</td>
            </tr>
          )
        })}
      </tbody>
    </table>
  )
}

function QuotePanel() {
  return (
    <aside className="flex w-[241px] shrink-0 flex-col overflow-hidden border-t-2 border-l border-t-[#c8c0c0] border-l-[#c01010] bg-black text-[14px] leading-5">
      <div className="relative flex h-[25px] shrink-0 items-center justify-center border-b border-[#c01010] pr-3.5">
        <h2 className='font-["Liberation_Mono","Noto_Sans_CJK_SC",monospace] text-[17px] font-bold text-[#ffff00]'>螺纹2005(rb2005)</h2>
        <button aria-label="最大化" className="absolute top-px right-px">
          <Icon>
            <path d="M.5 1.500h15v13H.5z" stroke="#7ab4ff" />
            <path d="M4 5h8v6H4z" stroke="#7ab4ff" strokeWidth="2" />
          </Icon>
        </button>
      </div>
      <div className="flex h-[5px] shrink-0 border-b border-[#c01010] px-px">
        <div className="flex-[202] bg-[#ff3c3c]" />
        <div className="flex-[36] bg-[#00e600]" />
      </div>
      <Depth rows={ASKS} />
      <Depth rows={BIDS} />
      <table className="w-full table-fixed border-b border-[#c01010]">
        <tbody>
          {STATS.map(([a, av, ac, b, bv, bc]) => (
            <tr key={a} className="h-5">
              <th className="w-10 py-0 pl-1 text-left font-normal text-[#e0e0e0]">{a}</th>
              <td className={clsx('w-[73px] p-0 text-right font-bold', ac)}>{av}</td>
              <th className="w-12 py-0 pl-3.5 text-left font-normal text-[#e0e0e0]">{b}</th>
              <td className={clsx('py-0 pr-[5px] text-right font-bold', bc)}>{bv}</td>
            </tr>
          ))}
        </tbody>
      </table>
      <table className="w-full table-fixed">
        <thead>
          <tr className="h-[22px] text-right text-[#808080]">
            <th className="w-[50px] py-0 pl-1 text-left font-normal">北京</th>
            <th className="w-[55px] p-0 font-normal">价格</th>
            <th className="w-[47px] p-0 font-normal whitespace-nowrap">√大单</th>
            <th className="w-[49px] p-0 font-normal">仓差</th>
            <th className="py-0 pl-2 text-left font-normal">性质</th>
          </tr>
        </thead>
        <tbody>
          {TICKS.map(([time, price, size, sizeDir, delta, kind, kindDir]) => (
            <tr key={time} className="h-[22px] text-right font-bold">
              <td className={clsx('py-0 pl-[5px] text-left', WHITE)}>
                {time.startsWith(':') ? (
                  <span className="inline-block w-[34px] text-right text-[12px] font-normal">{time}</span>
                ) : (
                  time
                )}
              </td>
              <td className={clsx('p-0', RED)}>{price}</td>
              <td className={clsx('p-0', sizeDir === 'r' ? RED : GREEN)}>{size}</td>
              <td className={clsx('p-0', YELLOW)}>{delta}</td>
              <td className={clsx('py-0 pl-2 text-left font-normal', kindDir === 'r' ? RED : GREEN)}>{kind}</td>
            </tr>
          ))}
        </tbody>
      </table>
      <div className="mt-auto flex h-[11px] shrink-0 text-[12px] leading-[15px] text-[#e0e0e0]">
        <button className="w-[35px] overflow-hidden leading-[15px]">笔</button>
        <div className="flex-1 rounded-tl-sm border-t border-l border-[#c01010]" />
      </div>
    </aside>
  )
}

export default function App() {
  return (
    <div className={clsx('flex h-screen flex-col overflow-hidden bg-black', SANS)}>
      <TopBar />
      <div className="flex min-h-0 flex-1">
        <SideTabs />
        <ChartArea />
        <QuotePanel />
        <div className="flex w-2 shrink-0 flex-col gap-2 overflow-hidden border-l-4 border-[#d2caca] bg-[#d4d4d4]">
          {SIDE_TABS.map((tab, n) => (
            <span
              key={tab}
              className={clsx('h-[74px] shrink-0 rounded-l-sm border border-r-0 border-[#666]', n === 0 ? 'bg-[#747474]' : 'bg-[#f2f2ea]')}
            />
          ))}
        </div>
      </div>
    </div>
  )
}
